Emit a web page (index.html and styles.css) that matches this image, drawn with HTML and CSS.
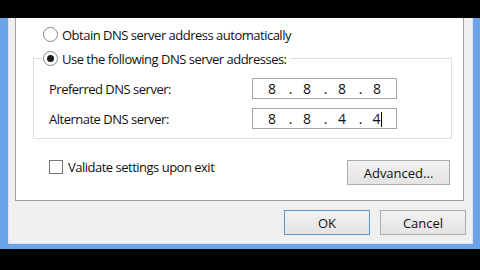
FILE: index.html
```html
<!DOCTYPE html>
<html>
<head>
<meta charset="utf-8">
<link rel="stylesheet" href="styles.css">
</head>
<body>
<div class="topbar"></div>
<div class="frame">
  <div class="dialog">
    <div class="panel">
      <div class="opt opt1"><span class="radio"></span><span class="lbl">Obtain DNS server address automatically</span></div>
      <div class="group">
        <div class="opt legend"><span class="radio checked"></span><span class="lbl">Use the following DNS server addresses:</span></div>
        <div class="field first">
          <span class="flabel">Preferred DNS server:</span>
          <div class="ip"><span class="seg">8</span><span class="dot">.</span><span class="seg">8</span><span class="dot">.</span><span class="seg">8</span><span class="dot">.</span><span class="seg">8</span></div>
        </div>
        <div class="field second">
          <span class="flabel">Alternate DNS server:</span>
          <div class="ip"><span class="seg">8</span><span class="dot">.</span><span class="seg">8</span><span class="dot">.</span><span class="seg">4</span><span class="dot">.</span><span class="seg">4<span class="caret"></span></span></div>
        </div>
      </div>
      <div class="bottomrow">
        <div class="check"><span class="box"></span><span class="lbl">Validate settings upon exit</span></div>
        <button class="btn adv">Advanced...</button>
      </div>
    </div>
    <div class="buttons">
      <button class="btn default">OK</button>
      <button class="btn">Cancel</button>
    </div>
  </div>
</div>
</body>
</html>
```
FILE: styles.css
```css
* { box-sizing: border-box; }
html, body { margin: 0; padding: 0; }
body {
  width: 480px;
  height: 270px;
  overflow: hidden;
  background: #000;
  font-family: "Open Sans", "Noto Sans", sans-serif;
  font-size: 13px;
  color: #111;
}
.topbar { height: 18px; background: #000; }
.frame {
  height: 231px;
  background: #6ca4ea;
  padding: 0 7px 5px 8px;
}
.dialog {
  height: 100%;
  background: #f0f0f0;
  border: 1px solid #d6e5f7;
  border-top: none;
  padding: 0 8px 0 6px;
  display: flex;
  flex-direction: column;
}
.panel {
  height: 183px;
  background: #fff;
  border: 1px solid #a0a0a0;
  border-top: none;
  padding-left: 17px;
}
.opt {
  display: flex;
  align-items: center;
  height: 17px;
  gap: 4px;
}
.opt1 { margin-left: 10px; margin-top: 8px; }
.radio {
  width: 15px;
  height: 15px;
  border-radius: 50%;
  border: 1px solid #858585;
  background: #fff;
  flex: 0 0 auto;
  display: flex;
  align-items: center;
  justify-content: center;
}
.radio.checked::after {
  content: "";
  width: 7px;
  height: 7px;
  border-radius: 50%;
  background: #1c1c1c;
}
.lbl, .flabel { white-space: nowrap; letter-spacing: -0.5px; }
.group {
  width: 419px;
  margin-top: 15px;
  border: 1px solid #dcdcdc;
  padding-bottom: 9px;
}
.legend {
  width: max-content;
  margin-top: -9px;
  margin-left: 9px;
  padding-right: 3px;
  background: #fff;
}
.field {
  display: flex;
  align-items: center;
  padding-left: 15px;
  height: 21px;
}
.field.first { margin-top: 11px; }
.field.second { margin-top: 9px; }
.flabel { flex: 0 0 203px; }
.ip {
  width: 145px;
  height: 21px;
  border: 1px solid #a5a5a5;
  background: #fff;
  display: flex;
  align-items: center;
  padding-left: 9px;
  font-size: 14px;
}
.seg { width: 20px; text-align: center; }
.dot { width: 15px; text-align: center; padding-left: 2px; }
.caret {
  display: inline-block;
  width: 1px;
  height: 15px;
  background: #000;
  vertical-align: -3px;
}
.bottomrow {
  width: 419px;
  display: flex;
  align-items: flex-start;
  margin-top: 21px;
}
.check {
  display: flex;
  align-items: center;
  gap: 5px;
  margin-left: 16px;
  margin-top: -1px;
  height: 15px;
}
.box {
  width: 14px;
  height: 14px;
  border: 1px solid #7a7a7a;
  background: #fff;
}
.btn {
  font-family: inherit;
  font-size: 13px;
  color: #111;
  width: 86px;
  height: 25px;
  border: 1px solid #acacac;
  background: linear-gradient(#f2f2f2, #e3e3e3);
  padding: 0;
  margin: 0;
}
.adv { width: 103px; margin-left: auto; margin-right: 2px; }
.buttons {
  display: flex;
  justify-content: flex-end;
  gap: 10px;
  margin-top: 9px;
  margin-right: -2px;
}
.btn.default { border-color: #5e95c4; }
```
